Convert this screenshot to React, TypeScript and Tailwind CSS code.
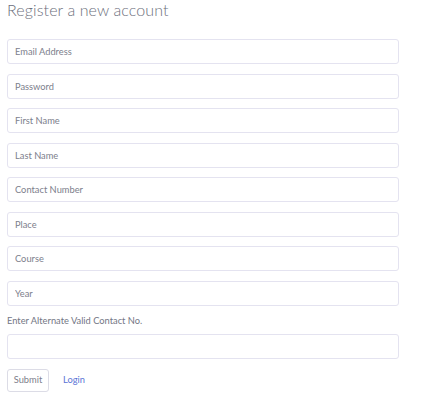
const fields = [
  'Email Address',
  'Password',
  'First Name',
  'Last Name',
  'Contact Number',
  'Place',
  'Course',
  'Year',
]

export default function App() {
  return (
    <div
      className="w-[440px] h-[398px] bg-white px-[7px] text-[#6e7180]"
      style={{ fontFamily: 'Lato, "Open Sans", sans-serif' }}
    >
      <h2 className="text-[16px] leading-[20px] font-light text-[#6c6f7c] mb-[19px] tracking-[0.1px]">
        Register a new account
      </h2>
      <form className="w-[392px] flex flex-col gap-[9.5px]">
        {fields.map((f) => (
          <input
            key={f}
            placeholder={f}
            className="h-[25px] rounded-[3px] border border-[#e4e3f0] px-[7px] text-[9.3px] placeholder:text-[#7d808c] outline-none"
          />
        ))}
        <label className="text-[9.3px] text-[#737684] leading-[12px]">
          Enter Alternate Valid Contact No.
        </label>
        <input className="h-[25px] -mt-[2.5px] rounded-[3px] border border-[#e4e3f0] px-[7px] text-[9.3px] outline-none" />
        <div className="flex items-center gap-[14px]">
          <button
            type="submit"
            className="h-[23px] w-[42px] rounded-[3px] border border-[#dcdce6] text-[9.3px] text-[#7d808c] bg-white"
          >
            Submit
          </button>
          <a className="text-[9.3px] text-[#5b74d6]">Login</a>
        </div>
      </form>
    </div>
  )
}
